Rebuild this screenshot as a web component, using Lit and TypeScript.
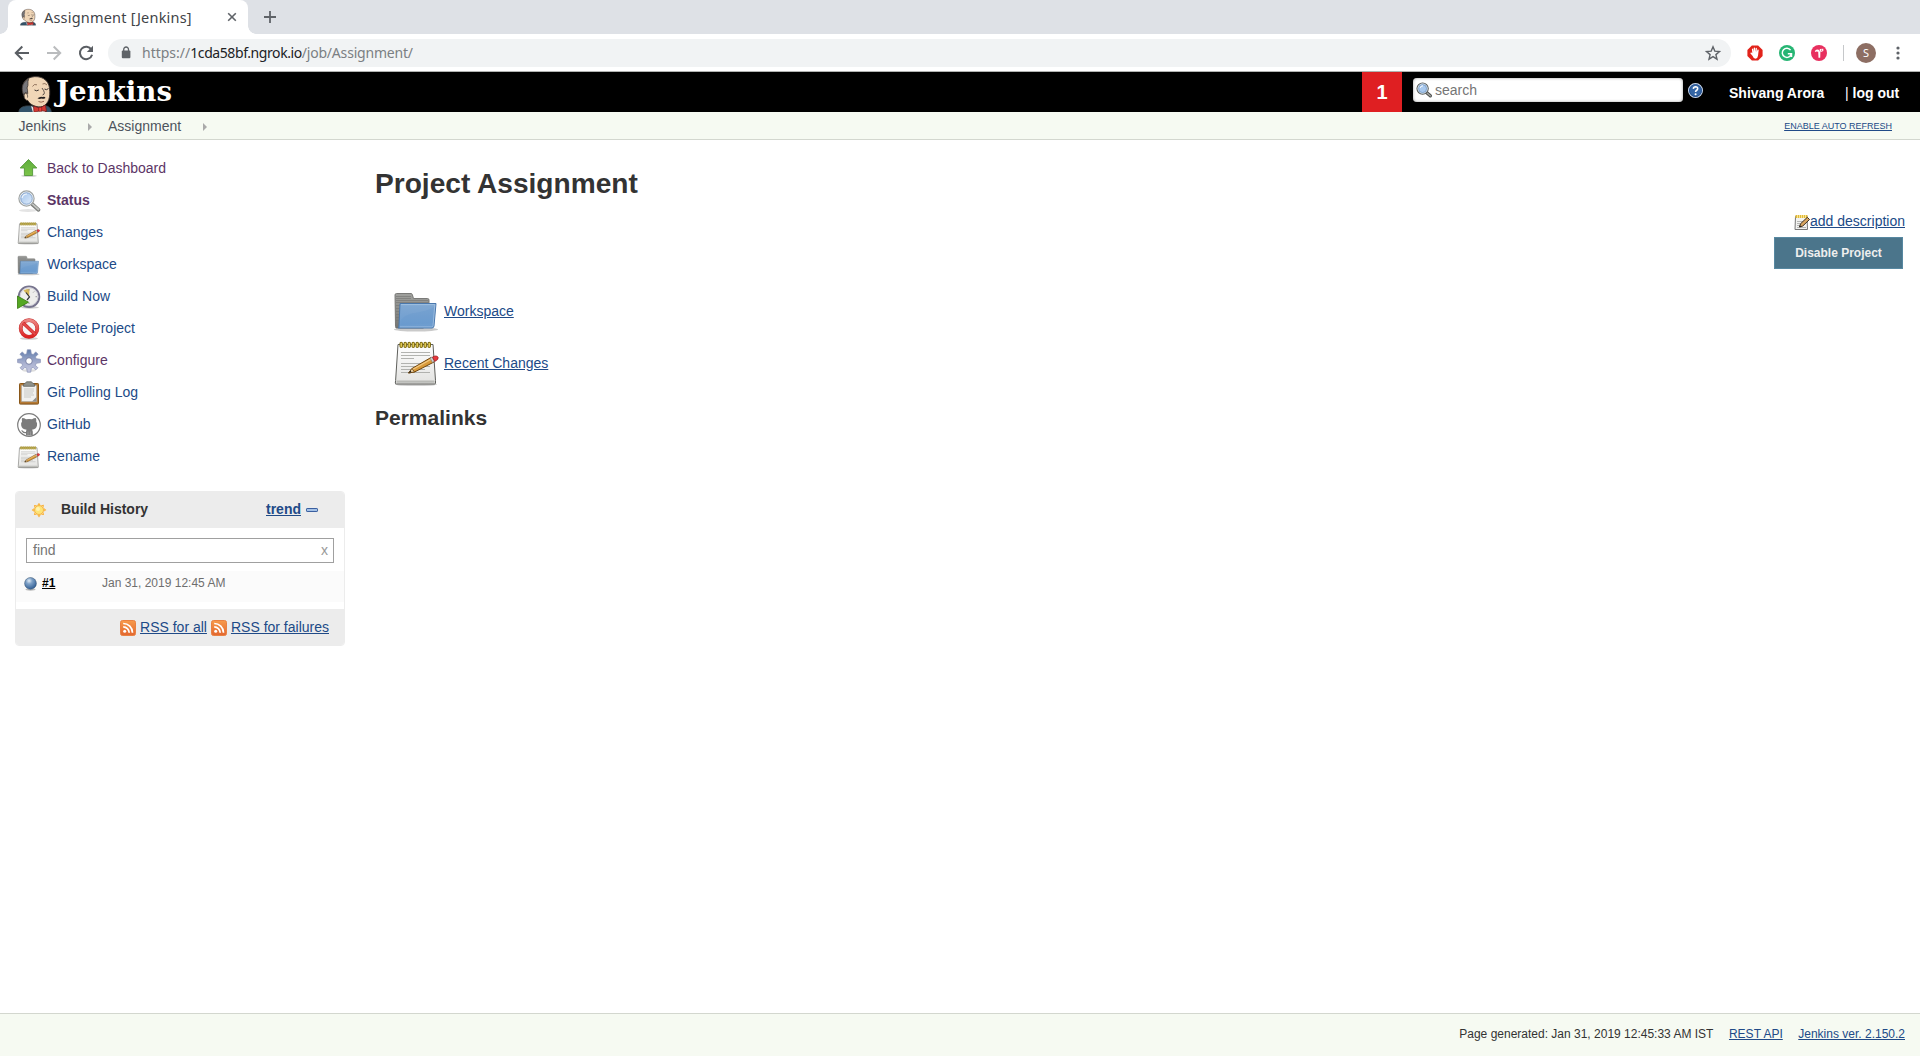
import { LitElement, html, svg, css } from "lit";
import { customElement, property } from "lit/decorators.js";
import { classMap } from "lit/directives/class-map.js";

const butler = svg`
  <path d="M.8 36.500 C1 32.500 3 31 8 30 L27 29.500 C31 30.500 33 32 33.300 36.500Z" fill="#33536a" stroke="#3b454c" stroke-width=".8"/>
  <path d="M13 30 L20 34 L27 29 L27 36.500 L15 36.500Z" fill="#e9e9e9"/>
  <path d="M6 20 C3 12 4 4 13 1.200 C23 -1.200 30.500 4 31.500 12 C32.500 21 31 27.500 24.500 30.500 C19 32 12 29 9.800 24.500 C7.500 24.500 6 22.500 6 20Z" fill="#f0d6b7" stroke="#3a3230" stroke-width=".9"/>
  <path d="M5.800 19.500 C3 13 3.500 6.500 10.500 3.200 C9 7 11 8.500 9 12 C10 14 9.300 15.500 9.800 17.500 L7.300 16.500Z" fill="#77767a" stroke="#3a3230" stroke-width=".8"/>
  <path d="M6.500 17.500 C8.500 16.500 10 18.500 9.500 21.500" fill="none" stroke="#3a3230" stroke-width=".8"/>
  <path d="M14.500 10.500 Q16 7.500 19 8.800 M24.500 8 Q27 6.500 29 9" fill="none" stroke="#7c5d49" stroke-width=".8"/>
  <path d="M16.500 14 Q18.500 15.600 20.800 14 M26.500 13 Q28.500 14.600 30.500 12.500" fill="none" stroke="#3a3230" stroke-width="1"/>
  <path d="M24 12 Q28.500 18 24.500 19" fill="none" stroke="#3a3230" stroke-width=".8"/>
  <path d="M19.500 22.300 Q22.500 20 24.500 21 Q27 20.300 27.500 22 Q25 23.400 23.500 22.500 Q21.500 23.500 19.500 22.300Z" fill="#231f20"/>
  <path d="M20.500 25.500 Q23 27 26 25.300" fill="none" stroke="#8b5b45" stroke-width=".9"/>
  <path d="M15.500 30 L21.500 32 L27.500 29 L28.500 35.500 L22.500 34.500 L16 36.500Z" fill="#d33833" stroke="#6b1a18" stroke-width=".7"/>
  <path d="M20.700 31.300 h3 v4 h-3z" fill="#ef3d3a" stroke="#6b1a18" stroke-width=".6"/>`;

const notepad = svg`
  <ellipse cx="23" cy="45.500" rx="21" ry="1.600" fill="#bdbdbd" opacity=".7"/>
  <path d="M5 5.500 L40 5.500 L42.500 41.500 L42.500 44 Q42.500 45 41.500 45 L3.500 45 Q2.300 45 2.300 44 L2.600 41.500Z" fill="url(#paper)" stroke="#5e5f5b" stroke-width="1"/>
  <path d="M3.500 41.500 H41.500 V43.800 H3.500Z" fill="#b9bab6"/>
  <path d="M8 13.500H37M8 16.500H37M8 19.500H21M8 24.500H37M8 27.500H37M8 30.500H32M8 33.500H37" stroke="#a9aaa7" stroke-width=".9"/>
  <g fill="#f4dc62" stroke="#7d6a11" stroke-width="1.100">
    ${[7, 11, 15, 19, 23, 27, 31, 35].map(x => svg`<rect x=${x} y="3.200" width="2.400" height="5.300" rx="1.200"/>`)}
  </g>
  <path d="M15.500 34 L19 29.500 L38 18.500 L41 23 L21.500 33Z" fill="#d99a3a" stroke="#70460f" stroke-width="1"/>
  <path d="M19.500 30.500 L38.500 20" stroke="#f3c983" stroke-width="1.200"/>
  <path d="M15.500 34 L19 29.500 L21.500 33Z" fill="#e9cfa4" stroke="#70460f" stroke-width=".8"/>
  <path d="M15.500 34 L17.500 31.500 L18.500 33.200Z" fill="#222"/>
  <path d="M37 19 L39 18 L41.500 22 L39.500 23.500Z" fill="#d0d0d0" stroke="#777" stroke-width=".6"/>
  <path d="M39.500 18 Q43.500 15.800 45.200 18.300 Q45.700 20.800 41.700 22.500Z" fill="#e8383d" stroke="#92181b" stroke-width=".7"/>`;

const folder = svg`
  <ellipse cx="23" cy="42.500" rx="22" ry="2" fill="#bdbdbd" opacity=".8"/>
  <path d="M2 8 Q2 6.500 3.500 6.500 H18 Q19 6.500 19.300 7.500 L20.500 11.500 H34.500 Q36 11.500 36 13 V38 L30 41 H3.500 Q2.500 41 2.500 39.500Z" fill="url(#steel)" stroke="#70706e" stroke-width=".9"/>
  <path d="M3 9.500H18M3 11.500H18M3 13.500H35M3 15.500H35M3 18.500H7M3 21.500H7M3 24.500H7M3 27.500H7M3 30.500H6M3 33.500H6" stroke="#737472" stroke-width=".6"/>
  <path d="M7 16.500 H43 L41 39 Q40.700 41 39 41 H5.200 Q6 40 6 38Z" fill="url(#blue)" stroke="#4a78ad" stroke-width="1"/>
  <path d="M8 17.600 H41.800 L40 38.800 Q39.700 39.900 38.700 39.900 H7" fill="none" stroke="#b4cfea" stroke-width=".6"/>
  <path d="M7.500 34 C15 23 28 28 41 20 L39.800 36 L7.500 38Z" fill="#5f93ca" opacity=".25"/>`;

const rss = svg`
  <rect x=".5" y=".5" width="15" height="15" rx="2" fill="url(#orange)" stroke="#e98142"/>
  <circle cx="4.700" cy="11.300" r="1.500" fill="#fff"/>
  <path d="M3.200 6.800 A6 6 0 0 1 9.200 12.800 M3.200 3.500 A9.300 9.300 0 0 1 12.500 12.800" fill="none" stroke="#fff" stroke-width="1.700"/>`;

const lens = svg`
  <ellipse cx="11" cy="21.500" rx="9" ry="1.500" fill="#e4e4e4"/>
  <path d="M15.500 15.500 L21.500 20.800" stroke="#7b7d7a" stroke-width="3.800" stroke-linecap="round"/>
  <path d="M15.500 15.200 L21.500 20.500" stroke="#c3c5c1" stroke-width="1.800" stroke-linecap="round"/>
  <circle cx="9.500" cy="9.500" r="7.600" fill="#b5d0ee" stroke="#a3a5a1" stroke-width="1.200"/>
  <circle cx="9.500" cy="9.500" r="6.400" fill="url(#glass)" stroke="#eee" stroke-width="1"/>
  <circle cx="9.500" cy="9.500" r="5.700" fill="none" stroke="#7b9cc6" stroke-width=".8"/>
  <path d="M5 9 Q6 5 10 5" stroke="#fff" stroke-width="1.200" fill="none" opacity=".8"/>`;

const icons: Record<string, { box: string; art: unknown }> = {
  butler: { box: "0 0 34 36", art: butler },
  notepad: { box: "0 0 48 48", art: notepad },
  folder: { box: "0 0 48 48", art: folder },
  rss: { box: "0 0 16 16", art: rss },
  lens: { box: "0 0 24 24", art: lens },
  find: {
    box: "0 0 16 16",
    art: svg`<path d="M10.500 10.500 L14.300 13.800" stroke="#4c4e4c" stroke-width="3.400" stroke-linecap="round"/>
      <path d="M10.800 10.800 L14.300 13.700" stroke="#a5a7a4" stroke-width="1.400" stroke-linecap="round"/>
      <circle cx="6.600" cy="6.600" r="5.600" fill="#9dc1ea" stroke="#5c5e5b" stroke-width="1.200"/>
      <circle cx="6.600" cy="6.600" r="4.600" fill="#a9c9ee" stroke="#e3e5e3" stroke-width=".9"/>
      <circle cx="6.600" cy="6.600" r="4" fill="none" stroke="#5d86bb" stroke-width=".6"/>
      <path d="M4 6 Q4.500 3.800 7 3.800" stroke="#fff" stroke-width="1" fill="none"/>`,
  },
  up: {
    box: "0 0 24 24",
    art: svg`<ellipse cx="12" cy="18.800" rx="8" ry="1.300" fill="#d5d5d5"/>
      <path d="M11.500 2.500 L19.800 11 H15.600 V18.500 H7.400 V11 H3.200Z" fill="url(#green)" stroke="#55983a" stroke-width=".9" stroke-linejoin="round"/>`,
  },
  clock: {
    box: "0 0 24 24",
    art: svg`<ellipse cx="13" cy="22.500" rx="9" ry="1.200" fill="#ccc"/>
      <circle cx="12" cy="11.700" r="10.300" fill="#eeeeec" stroke="#77748e" stroke-width="1.900"/>
      <circle cx="12" cy="11.700" r="9" fill="none" stroke="#c9c8d4" stroke-width=".9"/>
      <path d="M12 11.500 L6.500 5.500 Q9.500 3.600 12.500 3.700Z" fill="#d6b757"/>
      <path d="M12 4v1.500M18.500 11.700h1.500M12 19v-1.500M17.200 6.500l-1 1" stroke="#999" stroke-width="1"/>
      <path d="M9 7.500 L12.500 12 L10 15" fill="none" stroke="#34343c" stroke-width="1.200"/>
      <path d="M.5 11 L11.500 17.200 L.5 23.500Z" fill="#55a823" stroke="#39780f" stroke-width=".8"/>`,
  },
  stop: {
    box: "0 0 24 24",
    art: svg`<ellipse cx="12" cy="21.500" rx="9" ry="1.300" fill="#d0d0d0"/>
      <circle cx="12" cy="11.500" r="8.300" fill="#f7f7f7" stroke="#c43030" stroke-width="3.800"/>
      <circle cx="12" cy="11.500" r="8.300" fill="none" stroke="url(#red)" stroke-width="2.900"/>
      <path d="M6.200 6 L17.800 17" stroke="#c92323" stroke-width="3.400"/>
      <path d="M5.800 5.600 L18.200 17.400" stroke="#e34848" stroke-width="2.200"/>`,
  },
  gear: {
    box: "0 0 24 24",
    art: svg`<ellipse cx="12" cy="21.500" rx="7" ry="1.500" fill="#ddd"/>
      <g fill="url(#gearfill)" stroke="#8890b4" stroke-width=".7" stroke-linejoin="round">
      <path d="M9.700 4.700 L10.300 .8 H13.700 L14.300 4.700 L16.200 5.600 L18.700 2.900 L21.100 5.200 L18.400 7.900 L19.300 9.700 L23.400 10.300 V13.600 L19.300 14.300 L18.400 16.200 L20.900 18.800 L18.700 21 L16.200 18.400 L14.300 19.300 L13.700 23.200 H10.300 L9.700 19.300 L7.800 18.400 L5.300 21 L3.100 18.800 L5.600 16.200 L4.700 14.300 L.6 13.600 V10.300 L4.700 9.700 L5.600 7.900 L2.900 5.200 L5.300 2.900 L7.800 5.600Z"/></g>
      <circle cx="12" cy="12" r="3.300" fill="#fff" stroke="#777fa5" stroke-width="1"/>`,
  },
  clipboard: {
    box: "0 0 24 24",
    art: svg`<ellipse cx="12" cy="23.300" rx="10" ry=".7" fill="#ccc"/>
      <rect x="2.500" y="2.500" width="19" height="20.500" rx=".8" fill="#b57b36" stroke="#8a5718"/>
      <path d="M4.500 4.500 H19.500 V20.500 H4.500Z" fill="#f1f1ef" stroke="#a9a9a5" stroke-width=".6"/>
      <path d="M7 8h10M7 10h10M7 12h9M7 14h10M7 16h7" stroke="#d6d6d4" stroke-width="1.500"/>
      <path d="M15 20.500 L19.500 16 V20.500Z" fill="#8e8e8b"/>
      <path d="M6.500 5.300 V3.600 Q6.500 2.600 8 2.500 L9.500 .8 H14.500 L16 2.500 Q17.500 2.600 17.500 3.600 V5.300Z" fill="#8f918b" stroke="#62645f" stroke-width=".8"/>`,
  },
  github: {
    box: "0 0 24 24",
    art: svg`<circle cx="12" cy="12" r="11.300" fill="#fff" stroke="#7c7c7c" stroke-width="1.200"/>
      <path d="M5.200 4.900 Q7.300 4.900 9 6.300 Q12 5.500 15 6.300 Q16.800 4.900 18.800 4.900 Q19.600 6.500 19.200 8.400 Q20.500 10 20 12.600 Q19.300 16.300 15 16.800 Q15.800 17.700 15.800 19 V22.600 H9 V20.300 Q6.300 20.700 5.300 18.900 L4.200 17.500 Q5.300 17 6.300 18.300 Q7.500 19.500 9 18.900 Q9 17.600 9.600 16.800 Q4.900 16.300 4.200 12.600 Q3.700 10 5 8.400 Q4.500 6.500 5.200 4.900Z" fill="#7c7c7c"/>
      <path d="M11 18.500V22.500M13.400 18.500V22.500" stroke="#aaa" stroke-width=".6"/>`,
  },
  sun: {
    box: "0 0 16 16",
    art: svg`<path d="M8 .7 L9.600 3.200 L12.900 2.700 L12.600 5.800 L15.400 8 L12.600 9.800 L13 13 L9.800 12.700 L8 15.400 L6.200 12.700 L3 13 L3.400 9.900 L.6 8 L3.300 6 L3 3 L6.200 3.300Z" fill="#f8b23c"/>
      <circle cx="8" cy="8" r="5.300" fill="#fff" opacity=".55"/>
      <circle cx="8" cy="8" r="4.500" fill="#fde477" stroke="#f4b040" stroke-width=".9"/>
      <circle cx="7" cy="7" r="2" fill="#fff3b0"/>`,
  },
  minus: {
    box: "0 0 12 4",
    art: svg`<rect x=".5" y=".5" width="11" height="3" rx=".6" fill="#a4c1e6" stroke="#3a5fa0"/>`,
  },
  ball: {
    box: "0 0 13 14",
    art: svg`<ellipse cx="6.500" cy="12.600" rx="5" ry="1.100" fill="#bbb"/>
      <circle cx="6.500" cy="6.400" r="5.900" fill="url(#ballfill)" stroke="#35506f" stroke-width=".5"/>`,
  },
  help: {
    box: "0 0 16 16",
    art: svg`<circle cx="8" cy="8" r="7.400" fill="#3465a4" stroke="#c9d6ea" stroke-width="1.200"/>
      <circle cx="8" cy="8" r="6.400" fill="none" stroke="#204a87" stroke-width=".8"/>
      <path d="M5.700 6.200 Q5.900 4 8.100 4 Q10.400 4.100 10.300 6 Q10.200 7.300 8.900 8 Q8.100 8.500 8.100 9.700" fill="none" stroke="#fff" stroke-width="1.700"/>
      <circle cx="8.100" cy="11.900" r="1.100" fill="#fff"/>`,
  },
  close: { box: "0 0 10 10", art: svg`<path d="M1.200 1.200 L8.800 8.800 M8.800 1.200 L1.200 8.800" stroke="#5f6368" stroke-width="1.600"/>` },
  plus: { box: "0 0 12 12", art: svg`<path d="M6 0V12M0 6H12" stroke="#5f6368" stroke-width="1.800"/>` },
  back: { box: "0 0 16 16", art: svg`<path d="M15 8H2.500M8.300 1.500L1.800 8L8.300 14.500" fill="none" stroke="#5a5e63" stroke-width="2"/>` },
  forward: { box: "0 0 16 16", art: svg`<path d="M1 8H13.500M7.700 1.500L14.200 8L7.700 14.500" fill="none" stroke="#babcbe" stroke-width="2"/>` },
  reload: {
    box: "0 0 16 16",
    art: svg`<path d="M13.400 4.600 A6.200 6.200 0 1 0 14.100 9.700" fill="none" stroke="#5a5e63" stroke-width="2"/><path d="M15 .8V7H8.800Z" fill="#5a5e63"/>`,
  },
  lock: {
    box: "0 0 10 13",
    art: svg`<rect x=".8" y="4.500" width="8.600" height="7.800" rx="1" fill="#5f6368"/><path d="M2.700 5V3.400a2.400 2.400 0 0 1 4.800 0V5" fill="none" stroke="#5f6368" stroke-width="1.300"/>`,
  },
  star: {
    box: "0 0 16 16",
    art: svg`<path d="M8 1.800 L9.800 6.100 L14.500 6.500 L10.900 9.600 L12 14.200 L8 11.700 L4 14.200 L5.100 9.600 L1.500 6.500 L6.200 6.100Z" fill="none" stroke="#5f6368" stroke-width="1.400"/>`,
  },
  hand: {
    box: "0 0 16 16",
    art: svg`<path d="M4.900 .4 H11.100 L15.600 4.900 V11.100 L11.100 15.600 H4.900 L.4 11.100 V4.900Z" fill="#e2231a"/>
      <path d="M5.600 11 L3.300 8.300 Q3.600 7.200 4.800 7.800 L5.300 8.300 L4.900 4 Q5.400 3.200 6.100 3.900 L6.500 6.800 L6.700 2.900 Q7.300 2.100 8 2.800 L8.100 6.700 L8.700 3 Q9.400 2.400 9.900 3.200 L9.700 7 L10.600 4.500 Q11.500 4.100 11.700 5 L11 10.800 Q10.700 13.500 8.500 13.700 Q6.500 13.600 5.600 11Z" fill="#fff"/>`,
  },
  gram: {
    box: "0 0 16 16",
    art: svg`<circle cx="8" cy="8" r="8" fill="#26b573"/><path d="M11.600 5.100 A4.600 4.600 0 1 0 12.200 9.300 M8.800 8.800 H12.500 V12" fill="none" stroke="#fff" stroke-width="1.500"/>`,
  },
  pink: {
    box: "0 0 16 16",
    art: svg`<circle cx="8" cy="8" r="8" fill="#e8305f"/><path d="M3.800 7 Q4 4.300 6.300 4.500 L8.300 5 V7 L5.600 6.500Z" fill="#fff"/><path d="M8.800 3.900 L12.300 3.700 V6 L10.500 6.800 L8.800 6.500Z" fill="#fff"/><path d="M7.200 6.300 H9.400 L9.200 12.700 H7.500Z" fill="#fff"/><circle cx="10.600" cy="5.100" r=".7" fill="#e8305f"/>`,
  },
  dots: {
    box: "0 0 4 14",
    art: svg`<circle cx="2" cy="2" r="1.600" fill="#5f6368"/><circle cx="2" cy="7" r="1.600" fill="#5f6368"/><circle cx="2" cy="12" r="1.600" fill="#5f6368"/>`,
  },
  edit: {
    box: "0 0 16 16",
    art: svg`<path d="M1.500 2.500 H13 L13.500 15.500 H1Z" fill="#f2f2f0" stroke="#777" stroke-width="1"/>
      <path d="M3 7.500h8M3 9.500h6M3 11.500h3M3 13.500h9" stroke="#b5b5b3" stroke-width="1"/>
      <path d="M1.500 1 H13.500 V4 H1.500Z" fill="#e0b83a"/><path d="M3.500 1V4M5.500 1V4M7.500 1V4M9.500 1V4M11.500 1V4" stroke="#fff0a8" stroke-width=".8"/>
      <path d="M5.500 13 L6.500 9.800 L13.300 3.300 L15.500 5.500 L8.800 12Z" fill="#d9a560" stroke="#3b3024" stroke-width="1"/><path d="M5.500 13l.5-1.600 1.100 1.100z" fill="#111"/>`,
  },
};

@customElement("ui-icon")
class UiIcon extends LitElement {
  @property() name = "";
  static styles = css`
    :host { display: block; flex: none; }
    .art { display: block; width: 100%; height: 100%; overflow: visible; }
  `;
  render() {
    const icon = icons[this.name];
    return html`<svg class="art" viewBox=${icon.box} preserveAspectRatio="none">
      <defs>
        <linearGradient id="paper" x1="0" y1="0" x2="0" y2="1"><stop offset="0" stop-color="#fff"/><stop offset="1" stop-color="#e2e2e0"/></linearGradient>
        <linearGradient id="steel" x1="0" y1="0" x2="0" y2="1"><stop offset="0" stop-color="#a0a19e"/><stop offset="1" stop-color="#747572"/></linearGradient>
        <linearGradient id="blue" x1="0" y1="0" x2="0" y2="1"><stop offset="0" stop-color="#82a9d3"/><stop offset="1" stop-color="#6a9bcf"/></linearGradient>
        <linearGradient id="orange" x1="0" y1="0" x2="0" y2="1"><stop offset="0" stop-color="#f79a4b"/><stop offset="1" stop-color="#e2672f"/></linearGradient>
        <linearGradient id="glass" x1="0" y1="0" x2="1" y2="1"><stop offset="0" stop-color="#9fc1ea"/><stop offset="1" stop-color="#e2eefb"/></linearGradient>
        <linearGradient id="green" x1="0" y1="0" x2="0" y2="1"><stop offset="0" stop-color="#5fae3d"/><stop offset="1" stop-color="#7cc44a"/></linearGradient>
        <linearGradient id="red" x1="0" y1="0" x2="0" y2="1"><stop offset="0" stop-color="#ec8683"/><stop offset="1" stop-color="#dc2323"/></linearGradient>
        <linearGradient id="gearfill" x1="0" y1="0" x2="0" y2="1"><stop offset="0" stop-color="#5f7cab"/><stop offset=".6" stop-color="#aab1d0"/><stop offset="1" stop-color="#c5c8e0"/></linearGradient>
        <radialGradient id="ballfill" cx=".38" cy=".28" r=".75"><stop offset="0" stop-color="#e4edf6"/><stop offset=".35" stop-color="#7fa2c8"/><stop offset="1" stop-color="#2d5a91"/></radialGradient>
      </defs>
      ${icon.art}
    </svg>`;
  }
}

const tasks = [
  { icon: "up", label: "Back to Dashboard", visited: true },
  { icon: "lens", label: "Status", visited: true, current: true },
  { icon: "notepad", label: "Changes" },
  { icon: "folder", label: "Workspace" },
  { icon: "clock", label: "Build Now" },
  { icon: "stop", label: "Delete Project" },
  { icon: "gear", label: "Configure", visited: true },
  { icon: "clipboard", label: "Git Polling Log" },
  { icon: "github", label: "GitHub" },
  { icon: "notepad", label: "Rename" },
];

@customElement("browser-bar")
class BrowserBar extends LitElement {
  static styles = css`
    :host { display: block; font-family: "Noto Sans", sans-serif; }
    .strip { height: 34px; background: #dee1e6; display: flex; align-items: flex-start; padding-left: 8px; }
    .tab { box-sizing: border-box; position: relative; width: 240px; height: 34px; background: #fff; border-radius: 8px 8px 0 0; display: flex; align-items: center; padding: 0 11px 0 12px; }
    .tab::before, .tab::after { content: ""; position: absolute; bottom: 0; width: 8px; height: 8px; }
    .tab::before { left: -8px; background: radial-gradient(circle at 0 0, transparent 7.5px, #fff 8px); }
    .tab::after { right: -8px; background: radial-gradient(circle at 100% 0, transparent 7.5px, #fff 8px); }
    .fav { width: 16px; height: 16px; }
    .title { font-size: 14.500px; line-height: 20px; letter-spacing: .2px; color: #3f4347; margin-left: 8px; flex: 1; white-space: nowrap; }
    .close { width: 10px; height: 10px; }
    .plus { width: 12px; height: 12px; margin: 11px 0 0 16px; }
    .bar { height: 37px; background: #fff; border-bottom: 1px solid #b1b3b1; display: flex; align-items: center; padding-left: 14px; }
    .nav { width: 16px; height: 16px; margin-right: 16px; }
    .omni { width: 1623px; box-sizing: border-box; height: 28px; margin-left: -2px; border-radius: 14px; background: #f1f3f4; display: flex; align-items: center; padding: 0 10px 0 13px; }
    .lock { width: 10px; height: 13px; }
    .url { font-size: 14px; line-height: 20px; color: #7b7f83; margin-left: 11px; flex: 1; white-space: nowrap; }
    .host { color: #202124; letter-spacing: -.42px; }
    .path { letter-spacing: -.2px; }
    .star { width: 16px; height: 16px; }
    .ext { width: 16px; height: 16px; margin-left: 16px; }
    .sep { width: 1px; height: 16px; background: #c6c8ca; margin: 0 12px 0 16px; }
    .avatar { width: 20px; height: 20px; border-radius: 50%; background: #8d6e63; color: #fff; font-size: 11px; line-height: 20px; text-align: center; }
    .dots { width: 4px; height: 14px; margin-left: 20px; }
  `;
  render() {
    return html`
      <div class="strip">
        <div class="tab"><ui-icon class="fav" name="butler"></ui-icon><span class="title">Assignment [Jenkins]</span><ui-icon class="close" name="close"></ui-icon></div>
        <ui-icon class="plus" name="plus"></ui-icon>
      </div>
      <div class="bar">
        <ui-icon class="nav" name="back"></ui-icon><ui-icon class="nav" name="forward"></ui-icon><ui-icon class="nav" name="reload"></ui-icon>
        <div class="omni">
          <ui-icon class="lock" name="lock"></ui-icon>
          <span class="url">https://<span class="host">1cda58bf.ngrok.io</span><span class="path">/job/Assignment/</span></span>
          <ui-icon class="star" name="star"></ui-icon>
        </div>
        <ui-icon class="ext" name="hand"></ui-icon><ui-icon class="ext" name="gram"></ui-icon><ui-icon class="ext" name="pink"></ui-icon>
        <span class="sep"></span><span class="avatar">S</span><ui-icon class="dots" name="dots"></ui-icon>
      </div>`;
  }
}

@customElement("build-history")
class BuildHistory extends LitElement {
  static styles = css`
    :host { display: block; }
    .panel { box-sizing: border-box; width: 330px; height: 155px; border: 1px solid #ececec; border-radius: 4px; overflow: hidden; background: #fff; }
    .head { height: 36px; box-sizing: border-box; background: #ececec; display: flex; align-items: center; padding: 0 0 2px 15px; font-weight: bold; color: #333; }
    .sun { width: 16px; height: 16px; margin-top: 2px; }
    .name { margin-left: 14px; width: 205px; }
    a { color: #204a87; text-decoration: underline; }
    .minus { width: 12px; height: 4px; margin: 2px 0 0 5px; }
    .find { box-sizing: border-box; width: 308px; height: 25px; margin: 10px 0 0 10px; border: 1px solid #a0a0a0; display: flex; justify-content: space-between; padding: 0 5px 0 6px; line-height: 22px; color: #757575; }
    .x { color: #999; }
    .build { height: 31px; box-sizing: border-box; margin-top: 8px; background: #fbfbfb; display: flex; align-items: flex-start; padding: 4px 0 0 8px; font-size: 12px; line-height: 16px; }
    .ball { width: 13px; height: 14px; margin-top: 2px; }
    .num { width: 60px; margin-left: 5px; }
    .num a { color: #000; font-weight: bold; }
    .when { color: #6e6e6e; }
    .feeds { box-sizing: border-box; margin-top: 7px; height: 37px; background: #ececec; display: flex; align-items: center; justify-content: flex-end; padding: 0 15px 2px 0; }
    .rss { width: 16px; height: 16px; margin: 2px 4px 0 4px; }
  `;
  render() {
    return html`<div class="panel">
      <div class="head"><ui-icon class="sun" name="sun"></ui-icon><span class="name">Build History</span><a>trend</a><ui-icon class="minus" name="minus"></ui-icon></div>
      <div class="find"><span>find</span><span class="x">x</span></div>
      <div class="build"><ui-icon class="ball" name="ball"></ui-icon><span class="num"><a>#1</a></span><span class="when">Jan 31, 2019 12:45 AM</span></div>
      <div class="feeds"><ui-icon class="rss" name="rss"></ui-icon><a>RSS for all</a><ui-icon class="rss" name="rss"></ui-icon><a>RSS for failures</a></div>
    </div>`;
  }
}

@customElement("app-root")
class AppRoot extends LitElement {
  static styles = css`
    :host { display: flex; flex-direction: column; height: 1056px; width: 1920px; overflow: hidden; background: #fff; color: #333; font: 14px/20px "Liberation Sans", Arial, sans-serif; }
    a { color: #204a87; text-decoration: underline; }
    .header { height: 40px; background: #000; display: flex; align-items: center; color: #fff; font-weight: bold; overflow: hidden; }
    .logo { width: 34px; height: 36px; margin: 4px 0 0 18px; }
    .word { width: 120px; height: 40px; margin-left: 4px; overflow: visible; font: bold 27px "DejaVu Serif", serif; fill: #fff; }
    .alerts { margin-left: auto; width: 40px; height: 40px; background: #df1f22; font-size: 20px; line-height: 41px; text-align: center; }
    .search { box-sizing: border-box; width: 270px; height: 24px; margin: 0 5px 4px 11px; background: #fff; border-radius: 4px; box-shadow: inset 0 0 3px #999; display: flex; align-items: center; padding-left: 3px; color: #757575; font-weight: normal; }
    .searchicon { width: 16px; height: 16px; margin: 0 3px 1px 0; }
    .help { width: 15px; height: 15px; margin-top: -3px; }
    .user { margin: 2px 0 0 26px; width: 116px; }
    .logout { margin: 2px 21px 0 0; width: 54px; white-space: nowrap; }
    .pipe { font-weight: normal; }
    .crumbs { height: 27px; background: #f6faf2; border-bottom: 1px solid #d3d7cf; display: flex; align-items: center; padding: 0 28px 0 18.500px; color: #4d545d; }
    .tri { width: 0; height: 0; border: 4px solid transparent; border-left-color: #aaa; border-right: 0; margin: 2px 16px 0 22px; }
    .refresh { margin-left: auto; font-size: 9px; line-height: 20px; }
    .body { flex: 1; display: flex; }
    .side { width: 360px; padding: 12px 0 0 15px; box-sizing: border-box; }
    .task { height: 32px; display: flex; align-items: center; padding-left: 2px; color: #204a87; }
    .task.visited { color: #5c3566; }
    .task.current { font-weight: bold; }
    .taskicon { width: 24px; height: 24px; margin: 2px 6px 0 0; }
    .history { margin-top: 19px; }
    .main { flex: 1; padding: 0 15px; }
    h1 { font-size: 28.100px; line-height: 34px; margin: 27px 0 0; }
    .desc { display: flex; justify-content: flex-end; margin-top: 10px; height: 20px; }
    .edit { width: 16px; height: 16px; margin-top: 3px; }
    .button { box-sizing: border-box; width: 129px; height: 32px; margin: 6px 2px 0 auto; background: #4b758b; border: 1px solid #5788a1; color: #eee; font: bold 12px/31px "Liberation Sans", Arial, sans-serif; text-align: center; }
    .links { padding: 16px 0 0 16px; }
    .link { height: 52px; display: flex; align-items: center; }
    .linkicon { width: 48px; height: 48px; margin: 0 3px 0 2px; }
    h2 { font-size: 21px; line-height: 26px; margin: 16px 0 0; }
    .footer { height: 42px; background: #f6faf2; border-top: 1px solid #d3d7cf; display: flex; align-items: center; justify-content: flex-end; gap: 15.500px; padding-right: 15px; font-size: 12px; line-height: 40px; box-sizing: content-box; }
    .footer > * { margin-bottom: 2px; }
  `;
  render() {
    return html`
      <browser-bar></browser-bar>
      <div class="header">
        <ui-icon class="logo" name="butler"></ui-icon>
        <svg class="word"><text x="0" y="29" textLength="116" lengthAdjust="spacingAndGlyphs">Jenkins</text></svg>
        <span class="alerts">1</span>
        <div class="search"><ui-icon class="searchicon" name="find"></ui-icon>search</div>
        <ui-icon class="help" name="help"></ui-icon>
        <span class="user">Shivang Arora</span><span class="logout"><span class="pipe">| </span>log out</span>
      </div>
      <div class="crumbs"><span>Jenkins</span><span class="tri"></span><span>Assignment</span><span class="tri"></span><a class="refresh">ENABLE AUTO REFRESH</a></div>
      <div class="body">
        <div class="side">
          ${tasks.map(t => html`<div class=${classMap({ task: true, visited: !!t.visited, current: !!t.current })}><ui-icon class="taskicon" name=${t.icon}></ui-icon><span>${t.label}</span></div>`)}
          <build-history class="history"></build-history>
        </div>
        <div class="main">
          <h1>Project Assignment</h1>
          <div class="desc"><ui-icon class="edit" name="edit"></ui-icon><a>add description</a></div>
          <div class="button">Disable Project</div>
          <div class="links">
            <div class="link"><ui-icon class="linkicon" name="folder"></ui-icon><a>Workspace</a></div>
            <div class="link"><ui-icon class="linkicon" name="notepad"></ui-icon><a>Recent Changes</a></div>
          </div>
          <h2>Permalinks</h2>
        </div>
      </div>
      <div class="footer"><span>Page generated: Jan 31, 2019 12:45:33 AM IST</span><a>REST API</a><a>Jenkins ver. 2.150.2</a></div>`;
  }
}
